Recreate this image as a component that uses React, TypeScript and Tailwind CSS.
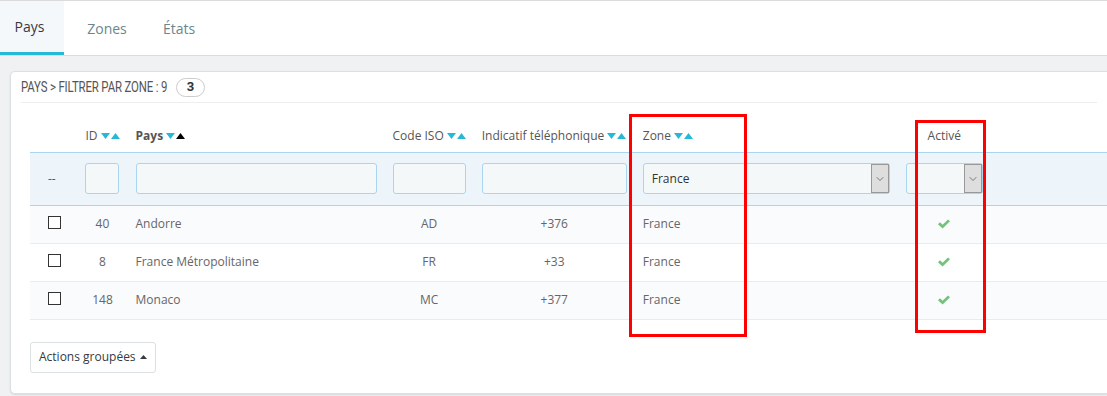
import { ChevronDown } from 'lucide-react'

const rows = [
  { id: 40, name: 'Andorre', iso: 'AD', call: '+376', zone: 'France' },
  { id: 8, name: 'France Métropolitaine', iso: 'FR', call: '+33', zone: 'France' },
  { id: 148, name: 'Monaco', iso: 'MC', call: '+377', zone: 'France' },
]

function SortArrows({ activeUp = false }: { activeUp?: boolean }) {
  return (
    <span className="ml-[3px] inline-flex items-center gap-[1px] align-middle">
      <svg width="9" height="6" viewBox="0 0 9 6">
        <path d="M0 0h9L4.5 6z" fill="#25b9d7" />
      </svg>
      <svg width="9" height="6" viewBox="0 0 9 6">
        <path d="M0 6h9L4.5 0z" fill={activeUp ? '#000' : '#25b9d7'} />
      </svg>
    </span>
  )
}

function Select({ value, width }: { value?: string; width: string }) {
  return (
    <div className={`flex h-[31px] items-stretch rounded-[3px] border border-[#a9d5f0] bg-[#f5f8f9] ${width}`}>
      <span className="flex flex-1 items-center pl-[8px] text-[12px] text-[#333]">{value}</span>
      <span className="flex w-[18px] items-center justify-center border border-[#999] bg-[#dedede]">
        <ChevronDown size={12} strokeWidth={1.5} className="text-[#555]" />
      </span>
    </div>
  )
}

function Input({ width }: { width: string }) {
  return <div className={`h-[31px] rounded-[3px] border border-[#a9d5f0] bg-[#f5f8f9] ${width}`} />
}

function CheckMark() {
  return (
    <svg width="12" height="10" viewBox="0 0 12 10" className="mx-auto block">
      <path d="M0 5.2 2 3.3 4.6 5.8 10 0.4 12 2.3 4.6 9.6z" fill="#72c279" />
    </svg>
  )
}

export default function App() {
  return (
    <div className="relative h-[396px] w-[1107px] overflow-hidden bg-[#eff1f2] font-['Open_Sans',sans-serif] text-[12px] text-[#555]">
      <div className="flex h-[56px] border-t border-b border-[#dcdcdc] bg-white">
        <div className="flex w-[64px] items-center justify-center border-b-[3px] border-[#25b9d7] bg-[#f4f8fb] pr-[5px] text-[14px] text-[#363a41]">
          Pays
        </div>
        <div className="flex w-[86px] items-center justify-center text-[14px] text-[#6c868e]">Zones</div>
        <div className="flex w-[58px] items-center justify-center text-[14px] text-[#6c868e]">États</div>
      </div>

      <div className="ml-[10px] mt-[15px] h-[323px] rounded-l-[5px] border border-r-0 border-[#dbe0e2] bg-white shadow-[0_1px_2px_rgba(0,0,0,0.1)]">
        <div className="mx-[10px] flex h-[31px] items-center border-b border-[#eeeeee] font-['Liberation_Sans_Narrow','Roboto',sans-serif] text-[15px] text-[#555]">
          <span className="inline-block w-[146px] origin-left scale-x-[0.76] whitespace-nowrap tracking-[-0.2px]">
            PAYS &gt; FILTRER PAR ZONE : 9
          </span>
          <span className="ml-[9px] flex h-[19px] w-[29px] items-center justify-center rounded-full border border-[#ccc] text-[13px] font-bold text-[#333]">
            3
          </span>
        </div>

        <table className="ml-[19px] mt-[12px] border-collapse">
          <colgroup>
            <col className="w-[48px]" />
            <col className="w-[50px]" />
            <col className="w-[257px]" />
            <col className="w-[89px]" />
            <col className="w-[161px]" />
            <col className="w-[263px]" />
            <col className="w-[93px]" />
            <col className="w-[120px]" />
          </colgroup>
          <thead>
            <tr className="h-[37px] align-bottom">
              <th />
              <th className="px-[8px] pb-[7px] text-left font-normal whitespace-nowrap">ID<SortArrows /></th>
              <th className="px-[8px] pb-[7px] text-left font-bold text-[#555] whitespace-nowrap">Pays<SortArrows activeUp /></th>
              <th className="px-[8px] pb-[7px] text-left font-normal whitespace-nowrap">Code ISO<SortArrows /></th>
              <th className="px-[8px] pb-[7px] text-left font-normal whitespace-nowrap">Indicatif téléphonique<SortArrows /></th>
              <th className="px-[8px] pb-[7px] text-left font-normal whitespace-nowrap">Zone<SortArrows /></th>
              <th className="px-[8px] pb-[7px] text-center font-normal whitespace-nowrap">Activé</th>
              <th />
            </tr>
            <tr className="h-[53px] border-y border-[#a9d5f0] bg-[#edf5fb]">
              <td className="pl-[18px] align-middle text-[#555]">--</td>
              <td className="px-[8px]"><Input width="w-[34px]" /></td>
              <td className="px-[8px]"><Input width="w-[241px]" /></td>
              <td className="px-[8px]"><Input width="w-[73px]" /></td>
              <td className="px-[8px]"><Input width="w-[145px]" /></td>
              <td className="px-[8px]"><Select value="France" width="w-[247px]" /></td>
              <td className="px-[8px]"><Select width="w-[77px]" /></td>
              <td />
            </tr>
          </thead>
          <tbody>
            {rows.map((r, i) => (
              <tr key={r.id} className={`h-[38px] border-b border-[#e9ebed] ${i % 2 === 0 ? 'bg-[#fafbfd]' : 'bg-white'}`}>
                <td className="pl-[18px]">
                  <div className="-mt-[3px] h-[13px] w-[13px] border border-[#333] bg-white" />
                </td>
                <td className="px-[8px] text-center text-[#666]">{r.id}</td>
                <td className="px-[8px] text-[#666]">{r.name}</td>
                <td className="px-[8px] text-center text-[#666]">{r.iso}</td>
                <td className="px-[8px] text-center text-[#666]">{r.call}</td>
                <td className="px-[8px] text-[#666]">{r.zone}</td>
                <td className="px-[8px]">
                  <CheckMark />
                </td>
                <td />
              </tr>
            ))}
          </tbody>
        </table>

        <button className="ml-[19px] mt-[22px] flex h-[31px] items-center rounded-[3px] border border-[#dbe0e2] bg-white px-[8px] text-[12px] text-[#363a41]">
          Actions groupées
          <svg width="7" height="4" viewBox="0 0 7 4" className="ml-[4px]">
            <path d="M0 4h7L3.5 0z" fill="#363a41" />
          </svg>
        </button>
      </div>

      <div className="pointer-events-none absolute left-[629px] top-[114px] h-[223px] w-[118px] border-[3px] border-[#ff0000]" />
      <div className="pointer-events-none absolute left-[915px] top-[120px] h-[213px] w-[71px] border-[3px] border-[#ff0000]" />
    </div>
  )
}
